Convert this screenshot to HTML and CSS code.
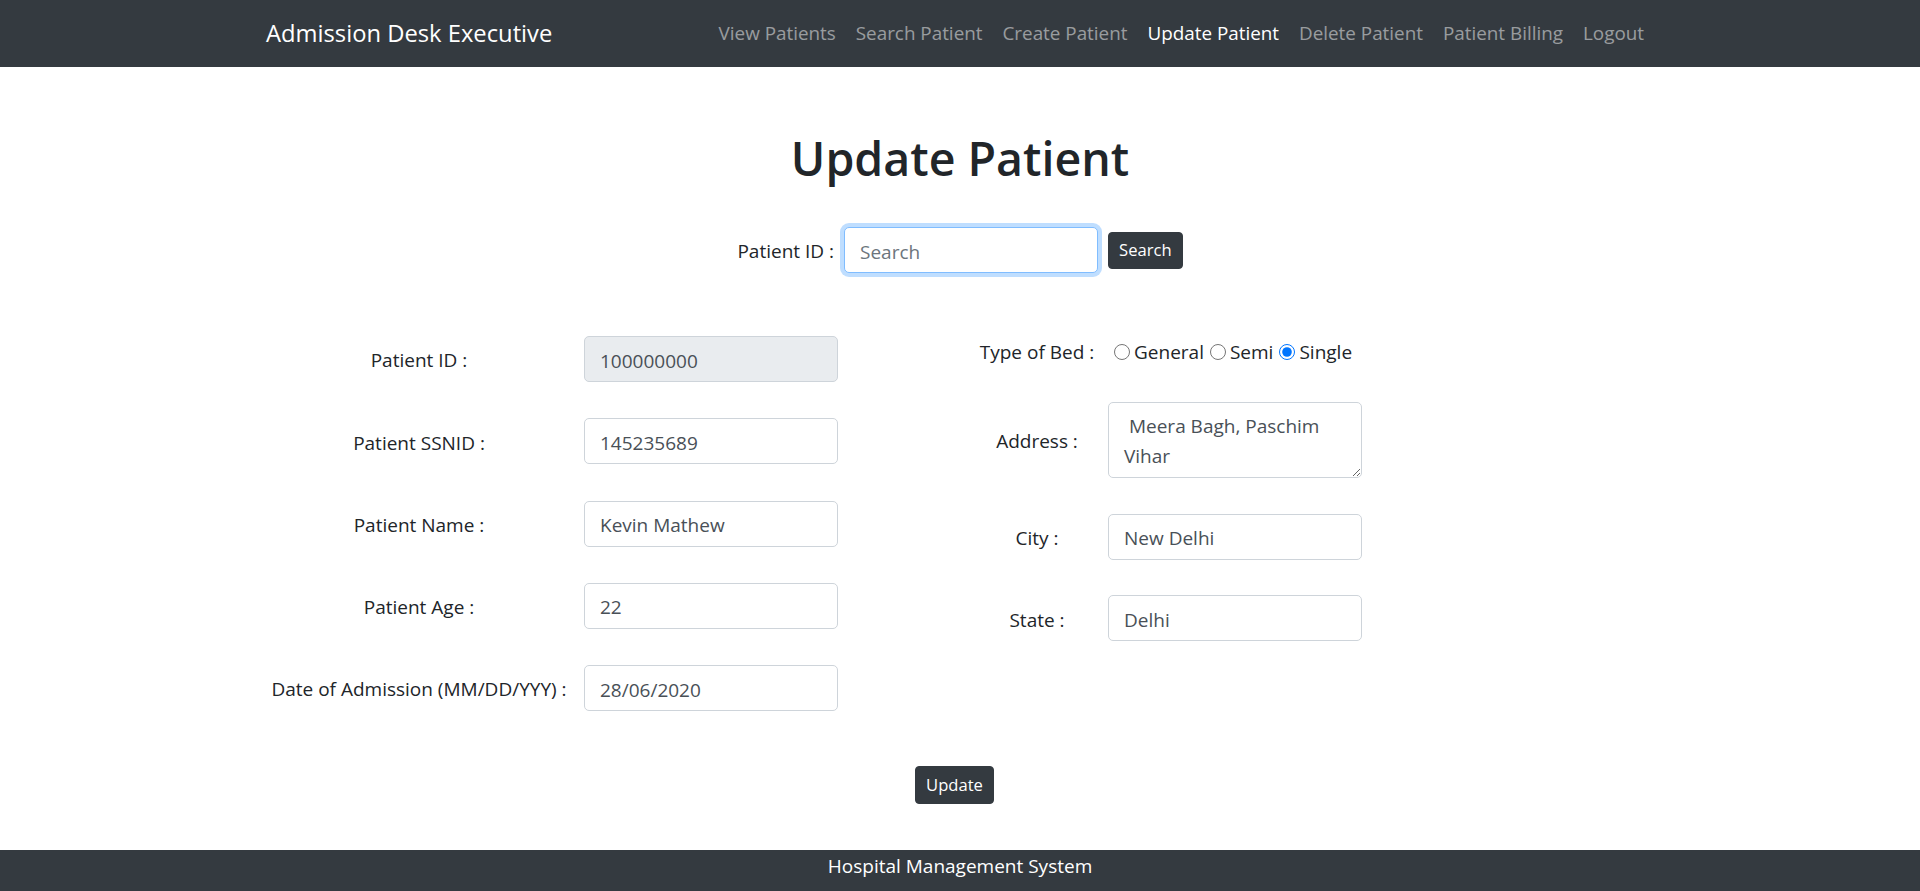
FILE: index.html
```html
<!DOCTYPE html>
<html lang="en">
<head>
<meta charset="utf-8">
<title>Update Patient</title>
<link rel="stylesheet" href="styles.css">
</head>
<body>
<header class="navbar">
  <div class="nav-inner">
    <a class="brand" href="#">Admission Desk Executive</a>
    <ul class="nav-links">
      <li><a href="#">View Patients</a></li>
      <li><a href="#">Search Patient</a></li>
      <li><a href="#">Create Patient</a></li>
      <li><a href="#" class="active">Update Patient</a></li>
      <li><a href="#">Delete Patient</a></li>
      <li><a href="#">Patient Billing</a></li>
      <li><a href="#">Logout</a></li>
    </ul>
  </div>
</header>
<main class="content">
  <h1 class="title">Update Patient</h1>
  <form class="search-row">
    <label class="search-label" for="sid">Patient ID :</label>
    <input id="sid" class="field field-focus" type="text" placeholder="Search">
    <button type="button" class="btn btn-search">Search</button>
  </form>
  <form class="patient-form">
    <div class="fields">
      <div class="table table-left">
        <label class="label" for="pid">Patient ID :</label>
        <input id="pid" class="field field-readonly" type="text" value="100000000" readonly>
        <label class="label" for="ssn">Patient SSNID :</label>
        <input id="ssn" class="field" type="text" value="145235689">
        <label class="label" for="pname">Patient Name :</label>
        <input id="pname" class="field" type="text" value="Kevin Mathew">
        <label class="label" for="page">Patient Age :</label>
        <input id="page" class="field" type="text" value="22">
        <label class="label" for="pdoa">Date of Admission (MM/DD/YYY) :</label>
        <input id="pdoa" class="field" type="text" value="28/06/2020">
      </div>
      <div class="table table-right">
        <span class="label">Type of Bed :</span>
        <div class="radios">
          <input type="radio" name="bed" id="bg" class="radio"><label for="bg">General</label>
          <input type="radio" name="bed" id="bs" class="radio"><label for="bs">Semi</label>
          <input type="radio" name="bed" id="bsi" class="radio" checked><label for="bsi">Single</label>
        </div>
        <label class="label" for="addr">Address :</label>
        <textarea id="addr" class="field area" rows="2"> Meera Bagh, Paschim Vihar</textarea>
        <label class="label" for="city">City :</label>
        <input id="city" class="field" type="text" value="New Delhi">
        <label class="label" for="state">State :</label>
        <input id="state" class="field" type="text" value="Delhi">
      </div>
    </div>
    <div class="actions">
      <button type="button" class="btn btn-update">Update</button>
    </div>
  </form>
</main>
<footer class="footer">Hospital Management System</footer>
</body>
</html>
```

FILE: styles.css
```css
html, body {
  margin: 0;
  padding: 0;
}

body {
  font-family: "Open Sans", "Noto Sans", "DejaVu Sans", sans-serif;
  font-size: 19px;
  line-height: 1.5;
  color: #212529;
  background: #fff;
  display: flex;
  flex-direction: column;
  min-height: 100vh;
}

/* Navbar */
.navbar {
  background: #343a40;
  height: 67px;
  display: flex;
  align-items: center;
  flex-shrink: 0;
}

.nav-inner {
  width: 1426px;
  margin: 0 auto;
  padding: 0 19px;
  box-sizing: border-box;
  display: flex;
  align-items: center;
  justify-content: space-between;
}

.brand {
  color: #fff;
  font-size: 23.75px;
  line-height: 1.5;
  text-decoration: none;
}

.nav-links {
  list-style: none;
  display: flex;
  margin: 0;
  padding: 0;
}

.nav-links a {
  display: block;
  padding: 0 10px;
  color: rgba(255, 255, 255, 0.5);
  font-size: 18.85px;
  text-decoration: none;
}

.nav-links a.active {
  color: #fff;
}

/* Main */
.content {
  flex: 1;
}

.title {
  margin: 63px 0 0;
  font-size: 46.5px;
  font-weight: 600;
  line-height: 57px;
  text-align: center;
  color: #212529;
}

.search-row {
  display: flex;
  justify-content: center;
  align-items: center;
  margin: 40px 0 0;
}

.search-label {
  margin-right: 10px;
  padding-top: 2px;
}

.field {
  box-sizing: border-box;
  width: 254px;
  height: 46px;
  margin: 0;
  padding: 3px 15px 0;
  border: 1px solid #ced4da;
  border-radius: 5px;
  font-family: inherit;
  font-size: 19px;
  color: #495057;
  background: #fff;
  outline: 0;
}

.field::placeholder {
  color: #6c757d;
}

.field-focus {
  border-color: #80bdff;
  box-shadow: 0 0 0 4px rgba(0, 123, 255, 0.25);
}

.field-readonly {
  background: #e9ecef;
}

.btn {
  box-sizing: border-box;
  height: 38px;
  padding: 1px 10px 0;
  border: 1px solid #343a40;
  border-radius: 4px;
  background: #343a40;
  color: #fff;
  font-family: inherit;
  font-size: 16.6px;
  line-height: 1.5;
  cursor: pointer;
}

.btn-search {
  margin-left: 10px;
  height: 37px;
}

/* Patient form */
.fields {
  display: flex;
  align-items: flex-start;
  margin: 63px 0 0 264px;
}

.table {
  display: grid;
  column-gap: 10px;
  align-items: center;
}

.table-left {
  grid-template-columns: 310px 254px;
  grid-auto-rows: 46px;
  row-gap: 36.3px;
}

.table-right {
  margin-left: 138px;
  grid-template-columns: 122px 254px;
  grid-template-rows: 30px 76px 46px 46px;
  row-gap: 35.8px;
}

.label {
  text-align: center;
  padding-top: 3px;
}

.radios {
  display: flex;
  align-items: center;
  padding-top: 2px;
}

.radio {
  width: 16px;
  height: 16px;
  margin: 0 4px 0 6px;
}

.area {
  height: 76px;
  padding: 8px 15px 6px;
  line-height: 30px;
  resize: both;
}

.actions {
  display: flex;
  justify-content: center;
  margin-top: 55px;
  padding-right: 11px;
}

/* Footer */
.footer {
  flex-shrink: 0;
  background: #343a40;
  color: #fff;
  text-align: center;
  height: 41px;
  box-sizing: border-box;
  padding-top: 1px;
  line-height: 30px;
}
```
